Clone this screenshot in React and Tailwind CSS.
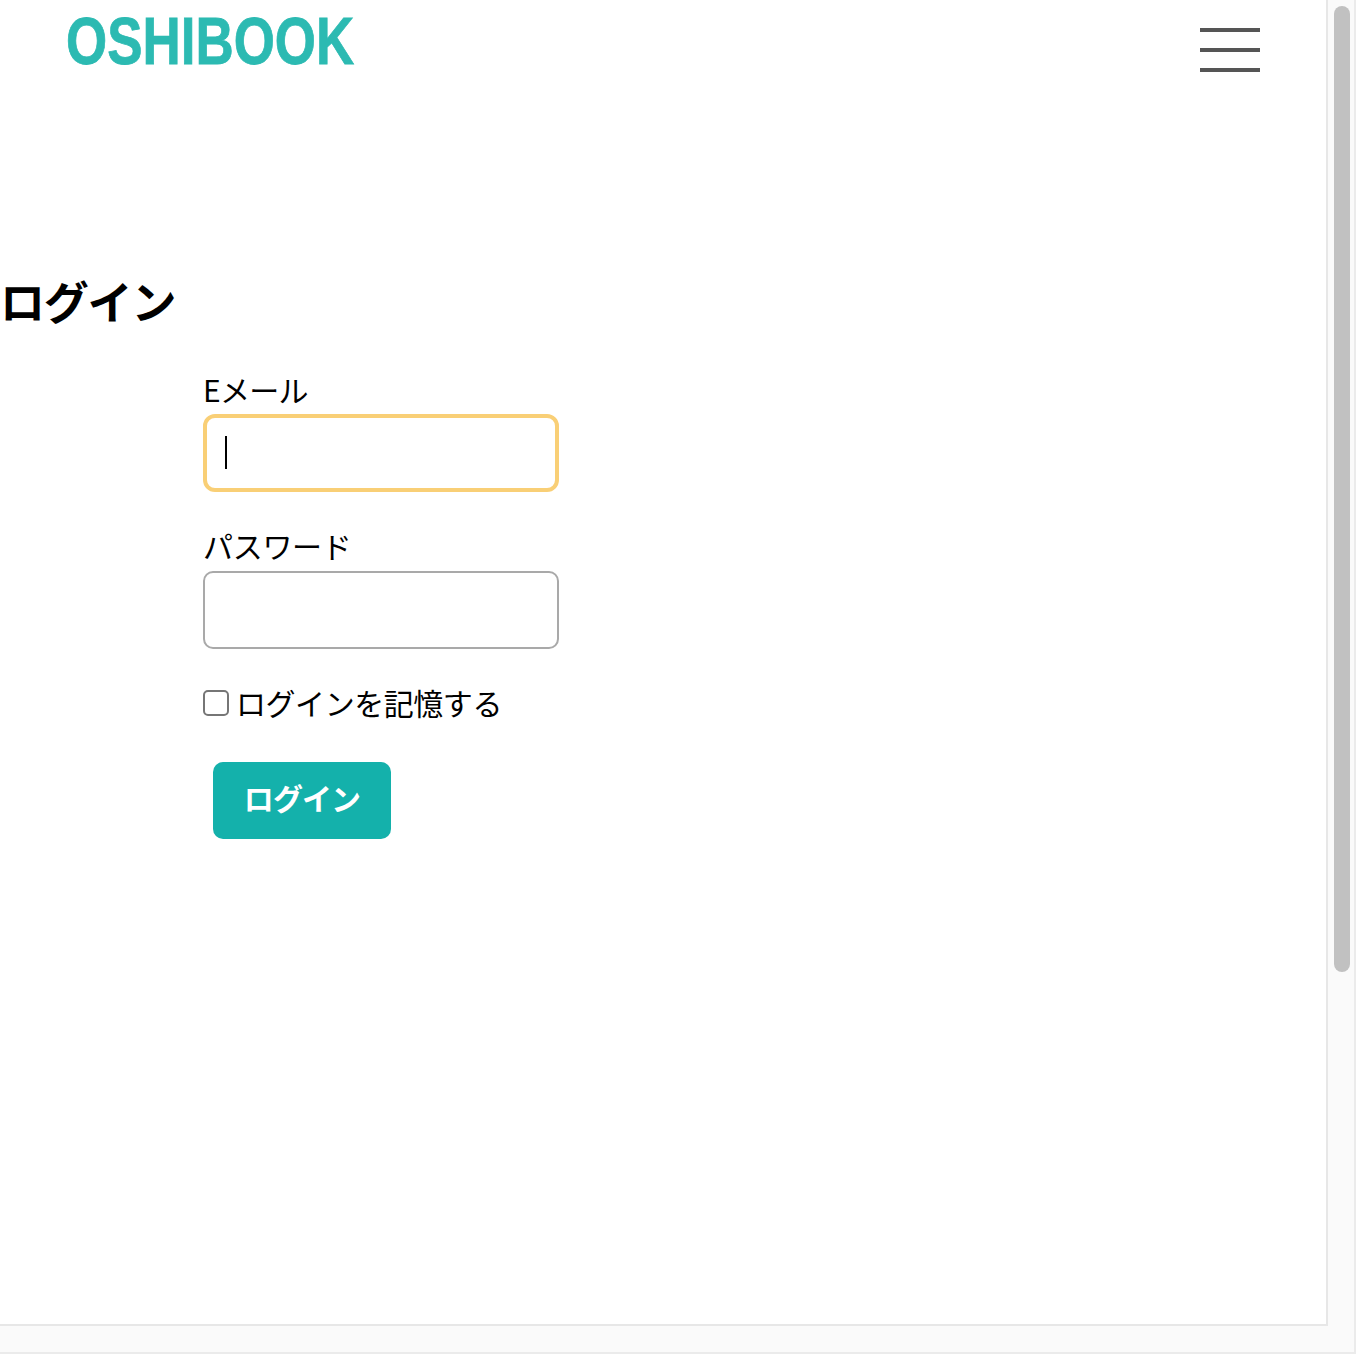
const jp = "font-['Noto_Sans_CJK_JP','Liberation_Sans',sans-serif]";

function Header() {
  return (
    <header className="flex h-[100px] items-start justify-between pr-[66px] pl-[66px]">
      <a
        href="#"
        className="mt-[3px] block h-[76px] w-[290px] origin-left scale-x-[0.802] font-['Liberation_Sans',sans-serif] text-[66px] leading-[76px] font-bold whitespace-nowrap text-[#2cbab2] [-webkit-text-stroke:0.8px_#2cbab2]"
      >
        OSHIBOOK
      </a>
      <button aria-label="Menu" className="mt-7 flex w-[60px] flex-col gap-4">
        <span className="h-1 bg-[#555555]" />
        <span className="h-1 bg-[#555555]" />
        <span className="h-1 bg-[#555555]" />
      </button>
    </header>
  );
}

function LoginForm() {
  return (
    <form className="ml-[203px] flex flex-col items-start text-[30px] leading-[44px]">
      <label className="mt-[30px] mb-[3px] h-11 tracking-[-0.7px]">Eメール</label>
      <div className="flex h-[78px] w-[356px] items-center rounded-[12px] border-4 border-[#f9cf76] pl-[18px]">
        <span className="mb-px h-[33px] w-0.5 bg-black" />
      </div>
      <label className="mt-[31px] mb-1 h-11 tracking-[-0.3px]">パスワード</label>
      <div className="h-[78px] w-[356px] rounded-[10px] border-2 border-[#a9a9a9]" />
      <label className="mt-8 flex h-11 items-center">
        <span className="size-[26px] rounded-[5px] border-2 border-[#767676]" />
        <span className="mb-0.5 ml-[7px] tracking-[-0.45px]">ログインを記憶する</span>
      </label>
      <button
        type="button"
        className="mt-[37px] ml-2.5 flex h-[77px] w-[178px] items-center justify-center rounded-[10px] bg-[#14b1ab] pb-2 font-bold tracking-[-0.9px] text-white"
      >
        ログイン
      </button>
    </form>
  );
}

export default function App() {
  return (
    <div className={`flex h-[1354px] w-[1356px] overflow-hidden border-r-2 border-b-2 border-[#ebebeb] bg-[#fafafa] text-black ${jp}`}>
      <main className="h-[1326px] w-[1328px] shrink-0 border-r-2 border-b-2 border-[#e7e7e7] bg-white">
        <Header />
        <h1 className="mt-[165px] h-[72px] text-[45px] leading-[72px] font-bold tracking-[-1.2px]">ログイン</h1>
        <LoginForm />
      </main>
      <div className="mt-[6px] ml-[6px] h-[966px] w-4 shrink-0 rounded-full bg-[#c1c1c1]" />
    </div>
  );
}
